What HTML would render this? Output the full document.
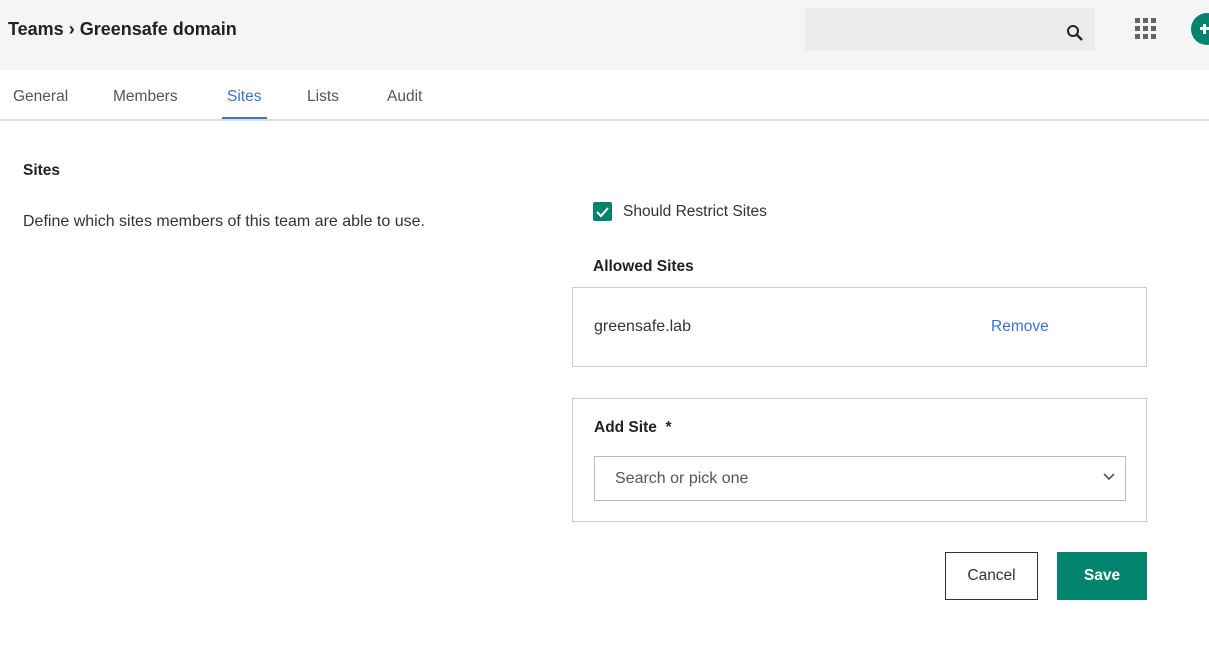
<!DOCTYPE html>
<html><head><style>
*{box-sizing:border-box;margin:0;padding:0}
body{width:1209px;height:667px;overflow:hidden;background:#fff;font-family:"Liberation Sans",sans-serif;color:#333;position:relative}
.a{position:absolute}
</style></head><body>
<div class="a" style="left:0;top:0;width:1209px;height:70px;background:#f5f5f5"></div>
<div class="a" style="left:8px;top:19px;font-size:18px;font-weight:bold;color:#222">Teams &#8250; Greensafe domain</div>
<div class="a" style="left:805px;top:8px;width:290px;height:43px;background:#ececec"></div>
<svg class="a" style="left:1066px;top:24px" width="18" height="18" viewBox="0 0 18 18"><circle cx="7" cy="7" r="5" fill="none" stroke="#222" stroke-width="2"/><path d="M11 11l5 5" stroke="#222" stroke-width="2.4"/></svg>
<svg class="a" style="left:1135px;top:18px" width="21" height="21"><g fill="#666"><rect x="0" y="0" width="5" height="5"/><rect x="8" y="0" width="5" height="5"/><rect x="16" y="0" width="5" height="5"/><rect x="0" y="8" width="5" height="5"/><rect x="8" y="8" width="5" height="5"/><rect x="16" y="8" width="5" height="5"/><rect x="0" y="16" width="5" height="5"/><rect x="8" y="16" width="5" height="5"/><rect x="16" y="16" width="5" height="5"/></g></svg>
<div class="a" style="left:1191px;top:13px;width:32px;height:32px;border-radius:50%;background:#01846d"></div>
<div class="a" style="left:1200px;top:27px;width:10px;height:3px;background:#fff"></div>
<div class="a" style="left:1203px;top:24px;width:3px;height:10px;background:#fff"></div>
<div class="a" style="left:13px;top:88px;font-size:15.5px;color:#555">General</div>
<div class="a" style="left:113px;top:88px;font-size:15.5px;color:#555">Members</div>
<div class="a" style="left:227px;top:88px;font-size:15.5px;color:#3a73d0">Sites</div>
<div class="a" style="left:307px;top:88px;font-size:15.5px;color:#555">Lists</div>
<div class="a" style="left:387px;top:88px;font-size:15.5px;color:#555">Audit</div>
<div class="a" style="left:222px;top:117px;width:45px;height:3px;background:#3a73d0"></div>
<div class="a" style="left:0;top:119px;width:1209px;height:2px;background:#ddd"></div>
<div class="a" style="left:23px;top:162px;font-size:15.5px;font-weight:bold;color:#222">Sites</div>
<div class="a" style="left:23px;top:213px;font-size:16px;color:#333">Define which sites members of this team are able to use.</div>
<div class="a" style="left:593px;top:202px;width:19px;height:19px;background:#01846d;border-radius:2px"></div>
<svg class="a" style="left:593px;top:202px" width="19" height="19"><path d="M4 10l4 4 7-8" fill="none" stroke="#fff" stroke-width="2"/></svg>
<div class="a" style="left:623px;top:203px;font-size:15.5px;color:#333">Should Restrict Sites</div>
<div class="a" style="left:593px;top:258px;font-size:15.5px;font-weight:bold;color:#222">Allowed Sites</div>
<div class="a" style="left:572px;top:287px;width:575px;height:80px;border:1px solid #ccc"></div>
<div class="a" style="left:594px;top:318px;font-size:16px;color:#333">greensafe.lab</div>
<div class="a" style="left:991px;top:318px;font-size:15.5px;color:#3a73d0">Remove</div>
<div class="a" style="left:572px;top:398px;width:575px;height:124px;border:1px solid #ccc"></div>
<div class="a" style="left:594px;top:419px;font-size:15.5px;font-weight:bold;color:#222">Add Site &nbsp;*</div>
<div class="a" style="left:594px;top:456px;width:532px;height:45px;border:1px solid #bbb"></div>
<div class="a" style="left:615px;top:470px;font-size:16px;color:#555">Search or pick one</div>
<svg class="a" style="left:1103px;top:473px" width="12" height="8"><path d="M1 1l5 5 5-5" fill="none" stroke="#555" stroke-width="1.6"/></svg>
<div class="a" style="left:945px;top:552px;width:93px;height:48px;border:1px solid #333;font-size:15.5px;color:#333;text-align:center;line-height:46px">Cancel</div>
<div class="a" style="left:1057px;top:552px;width:90px;height:48px;background:#01846d;font-size:15.5px;font-weight:bold;color:#fff;text-align:center;line-height:48px">Save</div>
</body></html>
